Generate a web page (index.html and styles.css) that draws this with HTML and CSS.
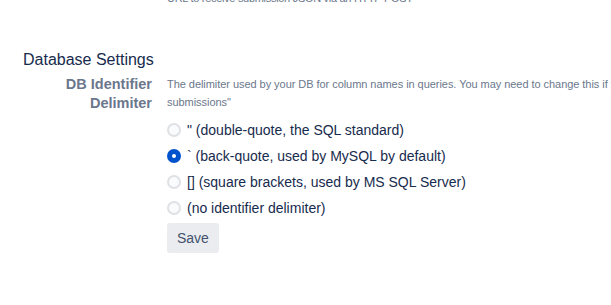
FILE: index.html
```html
<!DOCTYPE html>
<html lang="en">
<head>
    <meta charset="UTF-8">
    <meta name="viewport" content="width=device-width, initial-scale=1.0">
    <title>Form Settings</title>
    <link rel="stylesheet" href="styles.css">
</head>
<body>

    <div class="page">
        <div class="prev-description">URL to receive submission JSON via an HTTP POST</div>

        <h3>Database Settings</h3>

        <form class="field" onsubmit="return false">
            <label class="field-label" for="delim-double">DB Identifier Delimiter</label>
            <div class="field-body">
                <div class="description">
                    The delimiter used by your DB for column names in queries. You may need to change this if your database is not configured to use ANSI quotes for<br>submissions"
                </div>

                <div class="radios">
                    <label class="radio">
                        <input type="radio" name="delim" id="delim-double" value="double">
                        <span>" (double-quote, the SQL standard)</span>
                    </label>
                    <label class="radio">
                        <input type="radio" name="delim" value="back" checked>
                        <span>` (back-quote, used by MySQL by default)</span>
                    </label>
                    <label class="radio">
                        <input type="radio" name="delim" value="square">
                        <span>[] (square brackets, used by MS SQL Server)</span>
                    </label>
                    <label class="radio">
                        <input type="radio" name="delim" value="none">
                        <span>(no identifier delimiter)</span>
                    </label>
                </div>

                <button type="submit">Save</button>
            </div>
        </form>
    </div>

</body>
</html>
```

FILE: styles.css
```css
body {
    margin: 0;
    font-family: "Segoe UI", "Liberation Sans", Arial, sans-serif;
    color: #172b4d;
    background-color: #fff;
    overflow: hidden;
}
.page {
    width: 1400px;
    padding-left: 23px;
}
.prev-description {
    margin-top: -11px;
    padding-left: 144px;
    font-size: 11px;
    line-height: 18px;
    letter-spacing: -0.3px;
    color: #6b778c;
}
.field {
    display: flex;
    margin: 0;
}
.field-label {
    width: 129px;
    flex: none;
    text-align: right;
    font-size: 14.5px;
    font-weight: 600;
    line-height: 19px;
    color: #6b778c;
}
.field-body {
    margin-left: 15px;
    flex: 1;
}
.description {
    font-size: 11px;
    line-height: 18px;
    letter-spacing: -0.05px;
    color: #6b778c;
}
h3 {
    margin: 43px 0 5px;
    font-size: 16px;
    font-weight: 500;
    line-height: 20px;
    color: #172b4d;
}
.radios {
    margin-top: 6px;
}
.radio {
    display: flex;
    align-items: center;
    height: 26px;
    font-size: 14px;
}
.radio input {
    appearance: none;
    width: 14px;
    height: 14px;
    margin: 0 6px 0 0;
    border: 2px solid #dfe1e6;
    border-radius: 50%;
    background-color: #fafbfc;
    box-sizing: border-box;
}
.radio input:checked {
    border: 5px solid #0052cc;
    background-color: #fff;
}
button {
    margin-top: 2px;
    padding: 0 10px;
    height: 30px;
    font-family: inherit;
    font-size: 14px;
    color: #42526e;
    background-color: #ebecf0;
    border: none;
    border-radius: 3px;
    cursor: pointer;
}
button:hover {
    background-color: #dfe1e6;
}
```
